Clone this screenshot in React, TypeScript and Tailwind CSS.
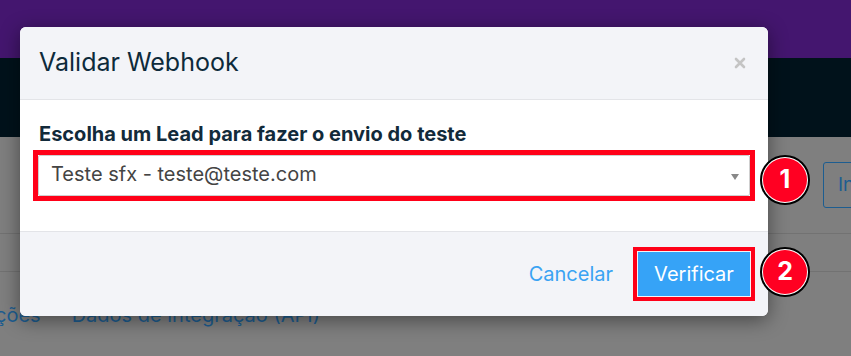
import React from 'react';

function Badge({ n }: { n: string }) {
  return (
    <div className="flex h-[50px] w-[50px] items-center justify-center rounded-full border-2 border-black bg-white p-[1px]">
      <div className="flex h-full w-full items-center justify-center rounded-full bg-[#ff0022] text-[25px] font-bold text-white">
        {n}
      </div>
    </div>
  );
}

export default function App() {
  return (
    <div className="relative h-[356px] w-[851px] overflow-hidden bg-[#7f7f7f] font-['Inter',sans-serif]">
      {/* Background page (dimmed) */}
      <div className="h-[58px] bg-[#44166f]" />
      <div className="h-[79px] bg-[#01121b]" />
      <div className="flex h-[97px] items-center justify-end border-b border-[#727272]">
        <div className="mr-[-20px] flex h-[46px] w-[48px] items-center rounded-[3px] border border-[#1d5d90] pl-[14px] text-[19px] text-[#1d5d90]">
          In
        </div>
      </div>
      <div className="h-[38px] border-b border-[#727272]" />
      <div className="flex gap-[31px] pt-[28px] text-[20px] text-[#1d5d90]">
        <span className="-ml-[5px]">ções</span>
        <span>Dados de integração (API)</span>
      </div>

      {/* Modal */}
      <div className="absolute left-[20px] top-[27px] w-[748px] overflow-hidden rounded-[6px] bg-white shadow-[0_4px_20px_rgba(0,0,0,0.45)]">
        <div className="flex h-[73px] items-center justify-between border-b border-[#e3e4e8] bg-[#f3f4f8] pl-[19px] pr-[22px]">
          <h2 className="text-[25px] font-normal text-[#0d2a3b]">Validar Webhook</h2>
          <svg width="12" height="12" viewBox="0 0 12 12" className="text-[#c4c4c4]">
            <path d="M2 2 L10 10 M10 2 L2 10" stroke="currentColor" strokeWidth="2.6" strokeLinecap="round" />
          </svg>
        </div>
        <div className="h-[131px] px-[19px] pt-[20px]">
          <div className="text-[20px] font-bold leading-[28px] text-[#122a3a]">
            Escolha um Lead para fazer o envio do teste
          </div>
          <div className="relative ml-[-6px] mt-[2px] w-[722px] border-[5px] border-[#ff0018] p-0">
            <div className="flex h-[41px] items-center justify-between rounded-[2px] border border-[#cfcfcf] bg-white pb-[3px] pl-[12px] pr-[10px]">
              <span className="text-[20px] text-[#444]">Teste sfx - teste@teste.com</span>
              <svg width="8" height="6" viewBox="0 0 8 6" className="mt-[6px]">
                <path d="M0 0 H8 L4 6 Z" fill="#888" />
              </svg>
            </div>
          </div>
        </div>
        <div className="flex h-[85px] items-center justify-end gap-[20px] border-t border-[#e3e4e8] bg-[#f3f4f8] pr-[13px]">
          <button className="text-[20px] text-[#3aa3f3]">Cancelar</button>
          <div className="border-[4px] border-[#ff0018] p-[1px]">
            <button className="flex h-[44px] w-[112px] items-center justify-center bg-[#36a3f7] text-[20px] text-white">
              Verificar
            </button>
          </div>
        </div>
      </div>

      {/* Step badges */}
      <div className="absolute left-[760px] top-[155px]">
        <Badge n="1" />
      </div>
      <div className="absolute left-[760px] top-[247px]">
        <Badge n="2" />
      </div>
    </div>
  );
}
